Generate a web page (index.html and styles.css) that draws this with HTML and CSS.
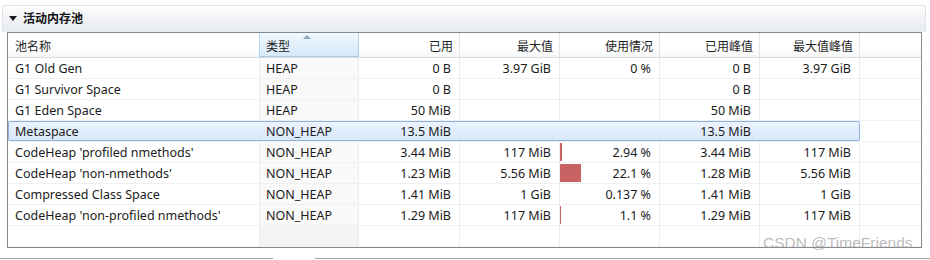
FILE: index.html
```html
<!DOCTYPE html>
<html lang="zh">
<head>
<meta charset="utf-8">
<title>活动内存池</title>
<link rel="stylesheet" href="styles.css">
</head>
<body>
<div class="panel">
  <div class="panel-head">
    <svg class="twisty" width="8" height="5" viewBox="0 0 8 5"><polygon points="0,0 8,0 4,5" fill="#1a1a1a"/></svg>
    <span class="title">活动内存池</span>
  </div>
  <div class="table">
    <div class="row head">
      <div class="cells">
        <div class="hc">池名称</div>
        <div class="hc sorted">类型<svg class="sort-arrow" width="8" height="4" viewBox="0 0 8 4"><polygon points="0,4 4,0 8,4" fill="#8fa9c4"/></svg></div>
        <div class="hc num">已用</div>
        <div class="hc num">最大值</div>
        <div class="hc num">使用情况</div>
        <div class="hc num">已用峰值</div>
        <div class="hc num">最大值峰值</div>
      </div>
      <div class="hc fill"></div>
    </div>

    <div class="row">
      <div class="cells">
        <div class="c">G1 Old Gen</div><div class="c type">HEAP</div>
        <div class="c num">0 B</div><div class="c num">3.97 GiB</div>
        <div class="c num usage">0 %</div>
        <div class="c num">0 B</div><div class="c num">3.97 GiB</div>
      </div>
      <div class="c fill"></div>
    </div>

    <div class="row">
      <div class="cells">
        <div class="c">G1 Survivor Space</div><div class="c type">HEAP</div>
        <div class="c num">0 B</div><div class="c num"></div>
        <div class="c num usage"></div>
        <div class="c num">0 B</div><div class="c num"></div>
      </div>
      <div class="c fill"></div>
    </div>

    <div class="row">
      <div class="cells">
        <div class="c">G1 Eden Space</div><div class="c type">HEAP</div>
        <div class="c num">50 MiB</div><div class="c num"></div>
        <div class="c num usage"></div>
        <div class="c num">50 MiB</div><div class="c num"></div>
      </div>
      <div class="c fill"></div>
    </div>

    <div class="row selected">
      <div class="cells">
        <div class="c">Metaspace</div><div class="c type">NON_HEAP</div>
        <div class="c num">13.5 MiB</div><div class="c num"></div>
        <div class="c num usage"></div>
        <div class="c num">13.5 MiB</div><div class="c num"></div>
      </div>
      <div class="c fill"></div>
    </div>

    <div class="row">
      <div class="cells">
        <div class="c">CodeHeap 'profiled nmethods'</div><div class="c type">NON_HEAP</div>
        <div class="c num">3.44 MiB</div><div class="c num">117 MiB</div>
        <div class="c num usage"><span class="bar" style="width:2px"></span>2.94 %</div>
        <div class="c num">3.44 MiB</div><div class="c num">117 MiB</div>
      </div>
      <div class="c fill"></div>
    </div>

    <div class="row">
      <div class="cells">
        <div class="c">CodeHeap 'non-nmethods'</div><div class="c type">NON_HEAP</div>
        <div class="c num">1.23 MiB</div><div class="c num">5.56 MiB</div>
        <div class="c num usage"><span class="bar" style="width:21px"></span>22.1 %</div>
        <div class="c num">1.28 MiB</div><div class="c num">5.56 MiB</div>
      </div>
      <div class="c fill"></div>
    </div>

    <div class="row">
      <div class="cells">
        <div class="c">Compressed Class Space</div><div class="c type">NON_HEAP</div>
        <div class="c num">1.41 MiB</div><div class="c num">1 GiB</div>
        <div class="c num usage">0.137 %</div>
        <div class="c num">1.41 MiB</div><div class="c num">1 GiB</div>
      </div>
      <div class="c fill"></div>
    </div>

    <div class="row">
      <div class="cells">
        <div class="c">CodeHeap 'non-profiled nmethods'</div><div class="c type">NON_HEAP</div>
        <div class="c num">1.29 MiB</div><div class="c num">117 MiB</div>
        <div class="c num usage"><span class="bar" style="width:1px"></span>1.1 %</div>
        <div class="c num">1.29 MiB</div><div class="c num">117 MiB</div>
      </div>
      <div class="c fill"></div>
    </div>

    <div class="row empty">
      <div class="cells">
        <div class="c"></div><div class="c type"></div>
        <div class="c num"></div><div class="c num"></div>
        <div class="c num usage"></div>
        <div class="c num"></div><div class="c num"></div>
      </div>
      <div class="c fill"></div>
    </div>
  </div>
</div>
<div class="bottom">
  <div class="line first"></div>
  <div class="line rest"></div>
</div>
<div class="watermark">CSDN @TimeFriends</div>
</body>
</html>
```

FILE: styles.css
```css
html, body {
  margin: 0;
  padding: 0;
  background: #ffffff;
}
body {
  width: 930px;
  height: 260px;
  overflow: hidden;
  position: relative;
  font-family: "Noto Sans", "Noto Sans CJK SC", sans-serif;
  font-size: 12.5px;
  color: #1b1b1b;
}
.panel {
  margin: 5px 4px 0 2px;
}
.panel-head {
  height: 26px;
  border: 1px solid #dfe3ea;
  border-bottom: 0;
  border-radius: 3px 3px 0 0;
  background: linear-gradient(#fdfdfe 0%, #f1f3f6 45%, #e8ebf0 100%);
  display: flex;
  align-items: center;
  padding-left: 6px;
  gap: 6px;
}
.twisty {
  display: block;
  margin-top: -1px;
}
.title {
  font-family: "Noto Sans CJK SC", sans-serif;
  font-weight: bold;
  font-size: 12px;
  color: #111;
  margin-top: -3px;
}
.table {
  margin: 0 4px 0 5px;
  border: 1px solid #85888f;
  height: 214px;
  overflow: hidden;
}
.row {
  display: flex;
  height: 20px;
  border-bottom: 1px solid #f0f0f0;
}
.row.head {
  height: 24px;
  border-bottom: 1px solid #dadada;
  background: linear-gradient(#ffffff 0%, #ffffff 55%, #f6f7f8 100%);
}
.cells {
  display: grid;
  grid-template-columns: 252px 99px 101px 100px 100px 100px 100px;
  flex: none;
}
.fill {
  flex: 1;
}
.c, .hc {
  display: flex;
  align-items: center;
  border-right: 1px solid #ececec;
  padding: 1px 0 0 7px;
  white-space: nowrap;
  overflow: hidden;
  position: relative;
}
.c.fill, .hc.fill {
  border-right: 0;
}
.c.type {
  padding-left: 6px;
  background: #f9f9f9;
}
.c.num {
  justify-content: flex-end;
  padding: 1px 8px 0 0;
}
.c.usage {
  padding-left: 0;
}
.bar {
  align-self: stretch;
  flex: none;
  background: #c96262;
  margin: 0 auto 1px 0;
}
.hc {
  font-family: "Noto Sans CJK SC", sans-serif;
  font-size: 12px;
  color: #1e1e1e;
  border-right-color: #e4e4e4;
  padding-top: 0;
}
.hc.num {
  justify-content: flex-end;
  padding: 0 6px 0 0;
}
.hc.sorted {
  padding-left: 6px;
  background: linear-gradient(#f1f8fe 0%, #e3f0fb 50%, #d6e9f8 100%);
  border-right-color: #b0d1eb;
  box-shadow: -1px 0 0 #b8d6ee, inset 0 -1px 0 #a9cbe8;
}
.sort-arrow {
  position: absolute;
  top: 2px;
  left: 50%;
  margin-left: -6px;
}
.row.selected .cells {
  background: linear-gradient(#edf4fd 0%, #e2edfb 50%, #d9e7fa 100%);
  box-shadow: inset 0 0 0 1px #8eb2e0;
  border-radius: 2px;
}
.row.selected .cells .c {
  border-right-color: transparent;
  background: transparent;
}
.row.empty .c.type {
  background: #f4f4f4;
}
.bottom {
  display: flex;
  margin-top: 10px;
  gap: 42px;
}
.line {
  height: 0;
  border-top: 1px solid #a3a3a3;
}
.line.first {
  width: 273px;
}
.line.rest {
  flex: 1;
}
.watermark {
  position: absolute;
  left: 763px;
  top: 234px;
  font-family: "Liberation Sans", Arial, sans-serif;
  font-size: 15.5px;
  color: rgba(150, 150, 150, 0.65);
  white-space: nowrap;
}
```
